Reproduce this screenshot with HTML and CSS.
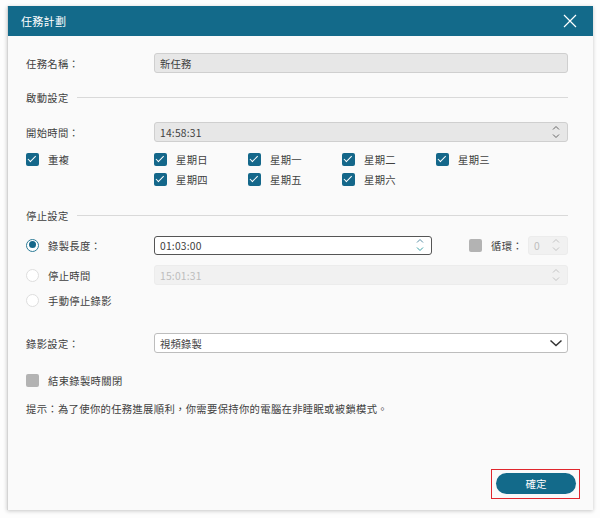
FILE: index.html
```html
<!DOCTYPE html>
<html lang="zh-Hant">
<head>
<meta charset="utf-8">
<title>任務計劃</title>
<link rel="stylesheet" href="styles.css">
</head>
<body>
<div class="dialog">
  <div class="titlebar">
    <span class="title">任務計劃</span>
    <svg class="close" width="14" height="14" viewBox="0 0 14 14"><path d="M1 1 L13 13 M13 1 L1 13" stroke="#fff" stroke-width="1.2" fill="none"/></svg>
  </div>
  <div class="body">
    <div class="row r-name">
      <span class="label">任務名稱：</span>
      <div class="field gray">新任務</div>
    </div>

    <div class="section s1"><span>啟動設定</span><i class="rule"></i></div>

    <div class="row r-start">
      <span class="label">開始時間：</span>
      <div class="field gray spin">
        <span>14:58:31</span>
        <svg class="arrows" width="10" height="16" viewBox="0 0 10 16"><path d="M2 5.5 L5 2.5 L8 5.5 M2 10.5 L5 13.5 L8 10.5" stroke="#666" stroke-width="1" fill="none"/></svg>
      </div>
    </div>

    <div class="repeat">
      <label class="check-item"><span class="cb on"></span>重複</label>
      <div class="days">
        <label class="check-item"><span class="cb on"></span>星期日</label>
        <label class="check-item"><span class="cb on"></span>星期一</label>
        <label class="check-item"><span class="cb on"></span>星期二</label>
        <label class="check-item"><span class="cb on"></span>星期三</label>
        <label class="check-item"><span class="cb on"></span>星期四</label>
        <label class="check-item"><span class="cb on"></span>星期五</label>
        <label class="check-item"><span class="cb on"></span>星期六</label>
      </div>
    </div>

    <div class="section s2"><span>停止設定</span><i class="rule"></i></div>

    <div class="row r-len">
      <label class="label radio-item"><span class="rb on"></span>錄製長度：</label>
      <div class="field white spin len">
        <span>01:03:00</span>
        <svg class="arrows" width="10" height="16" viewBox="0 0 10 16"><path d="M2 5.5 L5 2.5 L8 5.5" stroke="#5a8fa6" stroke-width="1" fill="none"/><path d="M2 10.5 L5 13.5 L8 10.5" stroke="#3aa0a6" stroke-width="1" fill="none"/></svg>
      </div>
      <label class="check-item loop"><span class="cb off"></span>循環：</label>
      <div class="field dis spin small">
        <span>0</span>
        <svg class="arrows" width="10" height="16" viewBox="0 0 10 16"><path d="M2 5.5 L5 2.5 L8 5.5 M2 10.5 L5 13.5 L8 10.5" stroke="#c4c4c4" stroke-width="1" fill="none"/></svg>
      </div>
    </div>

    <div class="row r-stop">
      <label class="label radio-item"><span class="rb"></span>停止時間</label>
      <div class="field dis spin">
        <span>15:01:31</span>
        <svg class="arrows" width="10" height="16" viewBox="0 0 10 16"><path d="M2 5.5 L5 2.5 L8 5.5 M2 10.5 L5 13.5 L8 10.5" stroke="#c4c4c4" stroke-width="1" fill="none"/></svg>
      </div>
    </div>

    <div class="row r-manual">
      <label class="label radio-item"><span class="rb"></span>手動停止錄影</label>
    </div>

    <div class="row r-rec">
      <span class="label">錄影設定：</span>
      <div class="field white select">
        <span>視頻錄製</span>
        <svg class="chev" width="14" height="10" viewBox="0 0 14 10"><path d="M1.5 2.5 L7 7.5 L12.5 2.5" stroke="#333" stroke-width="1.5" fill="none"/></svg>
      </div>
    </div>

    <div class="row r-close">
      <label class="check-item"><span class="cb off"></span>結束錄製時關閉</label>
    </div>

    <p class="hint">提示：為了使你的任務進展順利，你需要保持你的電腦在非睡眠或被鎖模式。</p>

    <div class="footer">
      <div class="highlight"><button class="ok">確定</button></div>
    </div>
  </div>
</div>
</body>
</html>
```
FILE: styles.css
```css
html, body {
  margin: 0;
  padding: 0;
  background: #fdfdfd;
}
body {
  font-family: "Noto Sans CJK TC", "Noto Sans", sans-serif;
  font-size: 10.3px;
  letter-spacing: 0.35px;
  color: #404040;
  width: 600px;
  height: 518px;
  overflow: hidden;
}
.dialog {
  margin: 6px 0 0 7px;
  width: 586px;
  height: 504px;
  background: #fafafa;
  border-left: 1px solid #d4d4d4;
  box-sizing: border-box;
  box-shadow: 0 1px 4px rgba(0,0,0,0.22);
  display: flex;
  flex-direction: column;
}
.titlebar {
  height: 30px;
  background: #136a8a;
  display: flex;
  align-items: center;
  justify-content: space-between;
  padding: 0 16px 0 13px;
  flex: none;
}
.title {
  color: #fff;
  font-size: 11px;
  letter-spacing: 0.3px;
}
.close { display: block; }
.body {
  padding: 0 25px 0 18px;
  display: flex;
  flex-direction: column;
}
.row {
  display: flex;
  align-items: center;
  height: 20px;
}
.label {
  width: 128px;
  flex: none;
  display: flex;
  align-items: center;
}
.field {
  flex: 1;
  height: 20px;
  box-sizing: border-box;
  border-radius: 3px;
  display: flex;
  align-items: center;
  padding: 0 6px 0 5px;
  letter-spacing: 0.2px;
}
.field.gray {
  background: #e7e7e7;
  border: 1px solid #cfcfcf;
}
.field.white {
  background: #fff;
  border: 1px solid #bdbdbd;
}
.field.dis {
  background: #f1f1f1;
  border: 1px solid #ececec;
  color: #bdbdbd;
}
.field.len {
  border: 1px solid #555;
  flex: none;
  width: 278px;
  height: 19px;
}
.field.small {
  flex: none;
  width: 40px;
  height: 19px;
}
.spin, .select { justify-content: space-between; }
.arrows, .chev { display: block; flex: none; }
.section {
  display: flex;
  align-items: center;
  height: 16px;
  gap: 8px;
}
.rule {
  flex: 1;
  height: 1px;
  background: #d9d9d9;
}
.r-name { margin-top: 17px; }
.s1 { margin-top: 16px; }
.r-start { margin-top: 17px; }
.repeat {
  margin-top: 7px;
  display: flex;
}
.repeat > .check-item {
  width: 128px;
  flex: none;
  align-self: flex-start;
}
.days {
  display: grid;
  grid-template-columns: repeat(4, 94px);
  grid-auto-rows: 20px;
}
.check-item {
  display: flex;
  align-items: center;
  height: 20px;
}
.cb {
  width: 13px;
  height: 13px;
  border-radius: 2px;
  box-sizing: border-box;
  margin-right: 9px;
  flex: none;
  position: relative;
}
.cb.on { background: #14678a; }
.cb.on::after {
  content: "";
  position: absolute;
  left: 4px;
  top: 1.5px;
  width: 3px;
  height: 6.5px;
  border: solid #fff;
  border-width: 0 1.6px 1.6px 0;
  transform: rotate(45deg);
}
.cb.off { background: #b3b3b3; }
.s2 { margin-top: 18px; }
.r-len { margin-top: 12px; }
.loop {
  margin-left: 37px;
  width: 59px;
  flex: none;
}
.rb {
  width: 13px;
  height: 13px;
  border-radius: 50%;
  box-sizing: border-box;
  border: 1px solid #dedede;
  background: #fff;
  margin-right: 9px;
  flex: none;
  position: relative;
}
.rb.on {
  border: 1.5px solid #2b7a96;
}
.rb.on::after {
  content: "";
  position: absolute;
  left: 1.5px;
  top: 1.5px;
  width: 7px;
  height: 7px;
  border-radius: 50%;
  background: #14678a;
}
.r-stop { margin-top: 10px; }
.r-manual { margin-top: 5px; }
.r-rec { margin-top: 23px; }
.select { padding-right: 4px; }
.r-close { margin-top: 17px; }
.hint {
  margin: 9px 0 0;
  height: 20px;
  line-height: 20px;
}
.footer {
  margin-top: 50px;
  margin-right: -12px;
  display: flex;
  justify-content: flex-end;
}
.highlight {
  border: 1.5px solid #e0262d;
  padding: 3px 3px 4px 4.5px;
}
.ok {
  display: block;
  width: 80px;
  height: 21px;
  border: none;
  border-radius: 11px;
  background: #136a8a;
  color: #fff;
  font-family: "Noto Sans CJK TC", sans-serif;
  font-size: 10.5px;
  padding: 0;
}
```
